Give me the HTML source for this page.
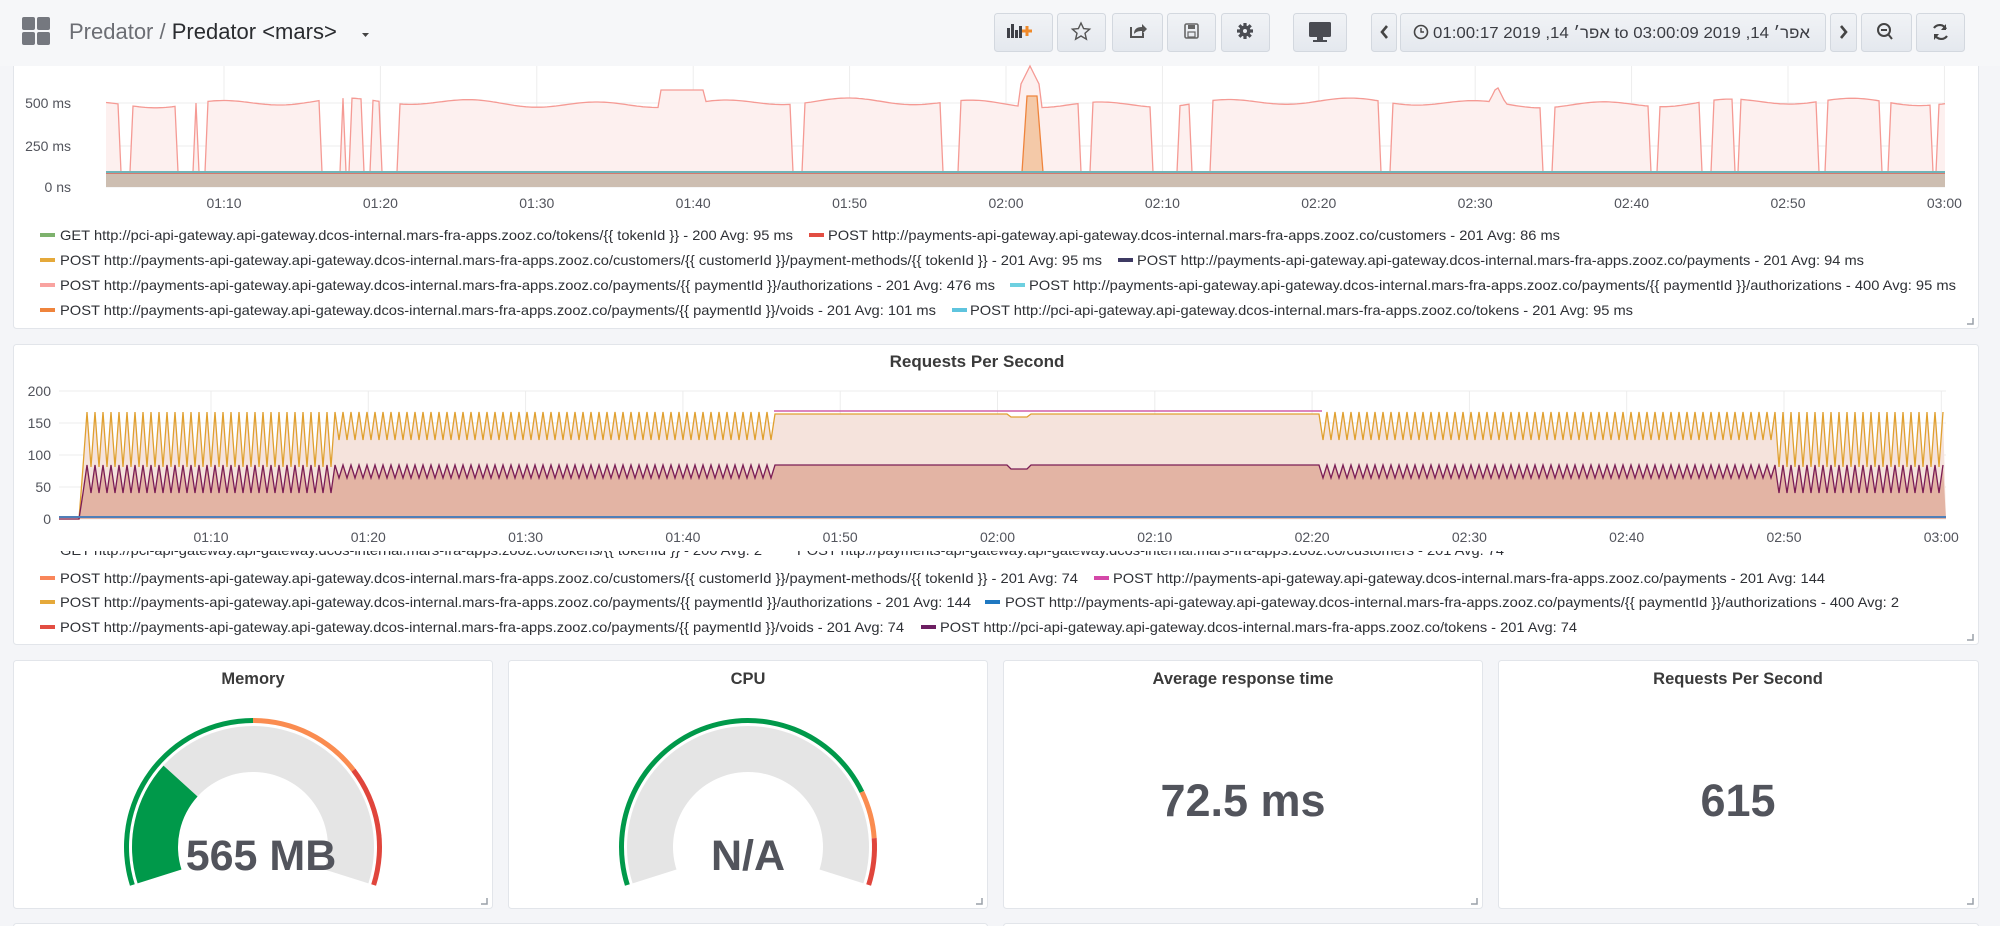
<!DOCTYPE html>
<html><head><meta charset="utf-8">
<style>
html,body{margin:0;padding:0;background:#f4f5f8;width:2000px;height:926px;overflow:hidden}
svg{display:block;font-family:"Liberation Sans",Arial,sans-serif}
</style></head>
<body>
<svg id="s" width="2000" height="926" viewBox="0 0 2000 926" xmlns="http://www.w3.org/2000/svg">
<defs>
<linearGradient id="bg" x1="0" y1="0" x2="0" y2="1"><stop offset="0" stop-color="#f1f3f6"/><stop offset="1" stop-color="#e4e8ee"/></linearGradient>
<clipPath id="clipA"><rect x="0" y="551" width="2000" height="20"/></clipPath>
</defs>
<rect width="2000" height="926" fill="#f4f5f8"/>

<rect x="13.5" y="60" width="1965" height="268.5" rx="3" fill="#fff" stroke="#e2e5ea"/>
<rect x="13.5" y="344.5" width="1965" height="300" rx="3" fill="#fff" stroke="#e2e5ea"/>
<rect x="13.5" y="660.5" width="479" height="248" rx="3" fill="#fff" stroke="#e2e5ea"/>
<rect x="508.5" y="660.5" width="479" height="248" rx="3" fill="#fff" stroke="#e2e5ea"/>
<rect x="1003.5" y="660.5" width="479" height="248" rx="3" fill="#fff" stroke="#e2e5ea"/>
<rect x="1498.5" y="660.5" width="480" height="248" rx="3" fill="#fff" stroke="#e2e5ea"/>
<rect x="13.5" y="923.5" width="974" height="20" rx="3" fill="#fff" stroke="#e2e5ea"/>
<rect x="1003.5" y="923.5" width="975" height="20" rx="3" fill="#fff" stroke="#e2e5ea"/>

<rect x="0" y="0" width="2000" height="66" fill="#f6f7f9"/>
<g fill="#75787f">
<rect x="22" y="17" width="13" height="13" rx="2"/><rect x="37" y="17" width="13" height="13" rx="2"/>
<rect x="22" y="32" width="13" height="13" rx="2"/><rect x="37" y="32" width="13" height="13" rx="2"/>
</g>
<text x="69" y="39" font-size="22" fill="#6c6e74">Predator / <tspan fill="#2a2c30">Predator &lt;mars&gt;</tspan></text>
<path d="M362 33 l7 0 l-3.5 4z" fill="#444"/>

<g stroke="#d3d8df" fill="url(#bg)">
<rect x="994.5" y="13.5" width="58" height="38" rx="3"/>
<rect x="1057.5" y="13.5" width="48" height="38" rx="3"/>
<rect x="1112.5" y="13.5" width="50" height="38" rx="3"/>
<rect x="1167.5" y="13.5" width="48" height="38" rx="3"/>
<rect x="1221.5" y="13.5" width="48" height="38" rx="3"/>
<rect x="1293.5" y="13.5" width="53" height="38" rx="3"/>
<rect x="1371.5" y="13.5" width="25" height="38" rx="3"/>
<rect x="1400.5" y="13.5" width="425" height="38" rx="3"/>
<rect x="1830.5" y="13.5" width="26" height="38" rx="3"/>
<rect x="1861.5" y="13.5" width="50" height="38" rx="3"/>
<rect x="1916.5" y="13.5" width="48" height="38" rx="3"/>
</g>
<g fill="#3e4047">
<rect x="1007" y="28" width="3" height="10"/><rect x="1011" y="24" width="3" height="14"/><rect x="1015" y="30" width="3" height="8"/><rect x="1019" y="26" width="3" height="12"/>
</g>
<path d="M1027 26v10M1022 31h10" stroke="#f08a2a" stroke-width="3"/>
<path d="M1081 23 l2.6 5.6 6 .6 -4.6 4 1.4 6 -5.4-3.2 -5.4 3.2 1.4-6 -4.6-4 6-.6z" fill="none" stroke="#555" stroke-width="1.4"/>
<path d="M1131 27 v10 h12 v-4" fill="none" stroke="#555" stroke-width="2"/>
<path d="M1134 34 c0-5 3-7 8-7 v-3 l5 5 -5 5 v-3 c-4 0-6 1-8 3z" fill="#555"/>
<rect x="1185" y="24" width="13" height="14" rx="1.5" fill="none" stroke="#666" stroke-width="1.6"/>
<rect x="1188" y="25" width="7" height="4" fill="#666"/><rect x="1188" y="32" width="7" height="5" fill="none" stroke="#666" stroke-width="1.2"/>
<circle cx="1245" cy="31" r="5.5" fill="#4a4c52"/>
<path d="M1245 23v16M1237 31h16M1239.3 25.3l11.4 11.4M1250.7 25.3l-11.4 11.4" stroke="#4a4c52" stroke-width="3.2"/>
<circle cx="1245" cy="31" r="2" fill="#eceff3"/>
<rect x="1309" y="22" width="22" height="15" rx="1.5" fill="#4a4c52"/><rect x="1317" y="37" width="6" height="3" fill="#4a4c52"/><rect x="1313" y="40" width="14" height="2" fill="#4a4c52"/>
<path d="M1387 26 l-5 6 5 6" fill="none" stroke="#444" stroke-width="2.6"/>
<path d="M1841 26 l5 6 -5 6" fill="none" stroke="#444" stroke-width="2.6"/>
<circle cx="1421" cy="32" r="6.5" fill="none" stroke="#444" stroke-width="1.6"/><path d="M1421 28v4h3" fill="none" stroke="#444" stroke-width="1.4"/>
<text x="1433" y="38" font-size="16" fill="#3a3c42" textLength="377" lengthAdjust="spacingAndGlyphs" style="unicode-bidi:bidi-override;direction:ltr">01:00:17 2019 ,14 ׳רפא to 03:00:09 2019 ,14 ׳רפא</text>
<circle cx="1884" cy="30" r="6" fill="none" stroke="#444" stroke-width="2"/><path d="M1881 30h6M1888 34l4 5" stroke="#444" stroke-width="2"/>
<path d="M1934 28 a7 7 0 0 1 12 1 M1947 36 a7 7 0 0 1 -12 -1" fill="none" stroke="#444" stroke-width="2.2"/>
<path d="M1946 24v6h-5z M1934 40v-6h5z" fill="#444"/>

<g id="c1"></g>
<g font-size="14" fill="#52545c" text-anchor="end">
<text x="71" y="108">500 ms</text><text x="71" y="151">250 ms</text><text x="71" y="192">0 ns</text>
</g>
<g id="x1" font-size="14" fill="#52545c" text-anchor="middle"></g>

<text x="977" y="367" font-size="17" font-weight="bold" fill="#3a3a3a" text-anchor="middle">Requests Per Second</text>
<g id="c2"></g>
<g font-size="14" fill="#52545c" text-anchor="end">
<text x="51" y="396">200</text><text x="51" y="428">150</text><text x="51" y="460">100</text><text x="51" y="492">50</text><text x="51" y="524">0</text>
</g>
<g id="x2" font-size="14" fill="#52545c" text-anchor="middle"></g>

<g id="lg" font-size="14" fill="#2e3035"></g>

<g font-size="16.5" font-weight="bold" fill="#3a3a3a" text-anchor="middle">
<text x="253" y="684">Memory</text><text x="748" y="684">CPU</text>
<text x="1243" y="684">Average response time</text><text x="1738" y="684">Requests Per Second</text>
</g>
<g id="gg"></g>
<g fill="#52545c" text-anchor="middle" font-weight="bold">
<text x="261" y="870" font-size="43">565 MB</text>
<text x="748" y="870" font-size="43">N/A</text>
<text x="1243" y="816" font-size="45">72.5 ms</text>
<text x="1738" y="816" font-size="45">615</text>
</g>
<g stroke="#9aa0a8" stroke-width="1.5" fill="none">
<path d="M1973 318v6h-6"/><path d="M1973 634v6h-6"/><path d="M487 898v6h-6"/><path d="M982 898v6h-6"/><path d="M1477 898v6h-6"/><path d="M1973 898v6h-6"/>
</g>
</svg>
<script>
var NS="http://www.w3.org/2000/svg";
function el(p,t,a,txt){var e=document.createElementNS(NS,t);for(var k in a)e.setAttribute(k,a[k]);if(txt!=null)e.textContent=txt;document.getElementById(p).appendChild(e);return e;}
var LB=['01:10','01:20','01:30','01:40','01:50','02:00','02:10','02:20','02:30','02:40','02:50','03:00'];
var X0=106,X1=1945;
for(var i=0;i<12;i++){var x=224+156.4*i;el('c1','line',{x1:x,x2:x,y1:66,y2:187,stroke:'#ececec'});el('x1','text',{x:x,y:208},LB[i]);}
[103,146,187].forEach(function(y){el('c1','line',{x1:X0,x2:X1,y1:y,y2:y,stroke:'#ececec'});});
var drops=[[121,131],[176,194],[197,205],[322,342],[345,350],[364,372],[380,385],[388,398],[791,804],[943,960],[1080,1092],[1152,1178],[1191,1210],[1379,1390],[1543,1554],[1649,1657],[1702,1713],[1733,1740],[1818,1826],[1880,1888],[1931,1936]];
function inDrop(x){for(var i=0;i<drops.length;i++)if(x>=drops[i][0]&&x<=drops[i][1])return true;return false;}
var pts=[];
for(var x=X0;x<=X1;x+=3){var y=103+3*Math.sin(x*0.05)+2*Math.sin(x*0.013);
 if(x>660&&x<705)y=90; if(x>1020&&x<1040)y=66+Math.abs(x-1030)*2; if(x>1490&&x<1505)y=86+Math.abs(x-1497)*2;
 if(inDrop(x))y=172; pts.push([x,y]);}
var d='M'+pts.map(function(p){return p[0]+','+p[1].toFixed(1)}).join(' L');
el('c1','path',{d:d+' L'+X1+',172 L'+X0+',172Z',fill:'#fdf0ef'});
el('c1','rect',{x:X0,y:172,width:X1-X0,height:15,fill:'#cdbeb1'});
el('c1','path',{d:d,fill:'none',stroke:'#f59a94','stroke-width':1.3});
el('c1','path',{d:'M1022,172 L1027,96 L1037,96 L1043,172',fill:'#f4c9a8',stroke:'#ef843c','stroke-width':1.3});
el('c1','line',{x1:X0,x2:X1,y1:172,y2:172,stroke:'#6fb4b8','stroke-width':2});
el('c1','line',{x1:X0,x2:X1,y1:173.5,y2:173.5,stroke:'#d47a6e','stroke-width':1});
var B=519;
for(var i=0;i<12;i++){var x=211+157.3*i;el('c2','line',{x1:x,x2:x,y1:391,y2:519,stroke:'#ececec'});el('x2','text',{x:x,y:542},LB[i]);}
[391,423,455,487,519].forEach(function(y){el('c2','line',{x1:59,x2:1946,y1:y,y2:y,stroke:'#ececec'});});
function seg(x){if(x<80)return 0;if(x<338)return 1;if(x<774)return 2;if(x<1322)return 3;if(x<1779)return 2;return 1;}
var G=[],M=[];
for(var x=59;x<=1946;x+=4){var s=seg(x),ph=(Math.round((x-80)/4))%2;
 var g,m;
 if(s==0){g=B;m=B;}
 else if(s==1){g=ph?467:412;m=ph?493:465;}
 else if(s==2){g=ph?440:412;m=ph?478:465;}
 else {g=414;m=465;if(x>1010&&x<1030){g=417;m=469;}}
 G.push([x,g]);M.push([x,m]);}
function pd(a){return 'M'+a.map(function(p){return p[0]+','+p[1]}).join(' L');}
el('c2','path',{d:pd(G)+' L1946,519 L59,519Z',fill:'#f5e3dc'});
el('c2','path',{d:pd(M)+' L1946,519 L59,519Z',fill:'#e3b4a4'});
el('c2','path',{d:'M774,411 L1322,411',stroke:'#d05ea8','stroke-width':1.5});
el('c2','path',{d:pd(G),fill:'none',stroke:'#e0a030','stroke-width':1.3});
el('c2','path',{d:pd(M),fill:'none',stroke:'#7b1d55','stroke-width':1.3});
el('c2','line',{x1:59,x2:1946,y1:517,y2:517,stroke:'#4f7fb8','stroke-width':2});
var H='http://payments-api-gateway.api-gateway.dcos-internal.mars-fra-apps.zooz.co/', P='http://pci-api-gateway.api-gateway.dcos-internal.mars-fra-apps.zooz.co/';
var L=[
[235,'#7eb26d',40,60,793,'GET '+P+'tokens/{{ tokenId }} - 200  Avg: 95 ms'],
[235,'#e24d42',809,828,1560,'POST '+H+'customers - 201  Avg: 86 ms'],
[260,'#e5a93a',40,60,1102,'POST '+H+'customers/{{ customerId }}/payment-methods/{{ tokenId }} - 201  Avg: 95 ms'],
[260,'#3e3a63',1118,1137,1864,'POST '+H+'payments - 201  Avg: 94 ms'],
[285,'#f9a3a0',40,60,995,'POST '+H+'payments/{{ paymentId }}/authorizations - 201  Avg: 476 ms'],
[285,'#6ed0e0',1010,1029,1956,'POST '+H+'payments/{{ paymentId }}/authorizations - 400  Avg: 95 ms'],
[310,'#ef843c',40,60,936,'POST '+H+'payments/{{ paymentId }}/voids - 201  Avg: 101 ms'],
[310,'#5ec4de',952,970,1633,'POST '+P+'tokens - 201  Avg: 95 ms'],
[578,'#f9865a',40,60,1078,'POST '+H+'customers/{{ customerId }}/payment-methods/{{ tokenId }} - 201  Avg: 74'],
[578,'#d448a8',1094,1113,1825,'POST '+H+'payments - 201  Avg: 144'],
[602,'#e5a93a',40,60,971,'POST '+H+'payments/{{ paymentId }}/authorizations - 201  Avg: 144'],
[602,'#1f78c1',985,1005,1899,'POST '+H+'payments/{{ paymentId }}/authorizations - 400  Avg: 2'],
[627,'#e24d42',40,60,904,'POST '+H+'payments/{{ paymentId }}/voids - 201  Avg: 74'],
[627,'#6d1f62',921,940,1577,'POST '+P+'tokens - 201  Avg: 74']
];
L.forEach(function(r){el('lg','rect',{x:r[2],y:r[0]-2,width:15,height:4,fill:r[1]});
 el('lg','text',{x:r[3],y:r[0]+5,textLength:r[4]-r[3],lengthAdjust:'spacingAndGlyphs'},r[5]);});
var c=el('lg','g',{'clip-path':'url(#clipA)'});
function ct(x,x2,t){var e=document.createElementNS(NS,'text');e.setAttribute('x',x);e.setAttribute('y',555);e.setAttribute('textLength',x2-x);e.setAttribute('lengthAdjust','spacingAndGlyphs');e.textContent=t;c.appendChild(e);}
ct(60,762,'GET '+P+'tokens/{{ tokenId }} - 200  Avg: 2');ct(797,1504,'POST '+H+'customers - 201  Avg: 74');
function P2(cx,cy,r,a){a=a*Math.PI/180;return (cx+r*Math.cos(a)).toFixed(2)+','+(cy-r*Math.sin(a)).toFixed(2);}
function band(cx,cy,r1,r2,a1,a2,f){var lg=(a1-a2)>180?1:0;
 el('gg','path',{d:'M'+P2(cx,cy,r2,a1)+' A'+r2+','+r2+' 0 '+lg+' 1 '+P2(cx,cy,r2,a2)+' L'+P2(cx,cy,r1,a2)+' A'+r1+','+r1+' 0 '+lg+' 0 '+P2(cx,cy,r1,a1)+'Z',fill:f});}
var A1=197.5,A2=-17.5;
band(253,847,75,121,A1,A2,'#e5e5e5');band(253,847,75,121,A1,137.7,'#00994a');
band(253,847,124,129,A1,90,'#00994a');band(253,847,124,129,90,37.4,'#fa8c50');band(253,847,124,129,37.4,A2,'#e0453c');
band(748,847,75,121,A1,A2,'#e5e5e5');
band(748,847,124,129,A1,25.8,'#00994a');band(748,847,124,129,25.8,4,'#fa8c50');band(748,847,124,129,4,A2,'#e0453c');
</script>
</body></html>
